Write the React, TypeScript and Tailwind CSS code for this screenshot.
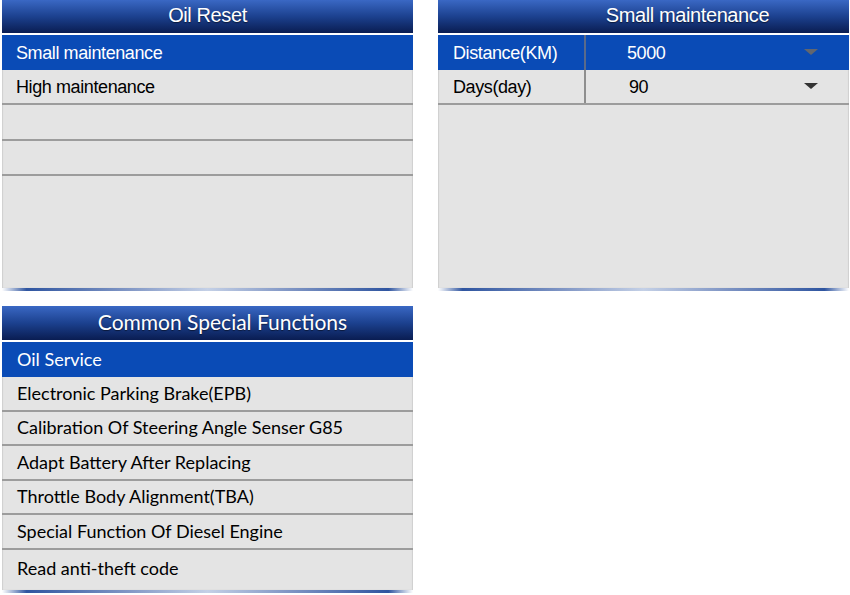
import React from "react";

const Header = ({ title, cls }: { title: string; cls: string }) => (
  <div
    className={`flex items-center justify-center text-white bg-gradient-to-b from-[#3a68c4] via-[#1c418f] to-[#0a1d52] border-b-2 border-white pb-[3px] ${cls}`}
  >
    <span className="[text-shadow:0_1px_1px_rgba(0,0,0,0.5)]">{title}</span>
  </div>
);

const BottomGlow = () => (
  <div className="h-[3px] bg-[linear-gradient(to_right,rgba(47,85,160,0)_0%,#2f55a0_6%,#7f95c4_30%,#c4d0e6_50%,#7f95c4_70%,#2f55a0_94%,rgba(47,85,160,0)_100%)]" />
);

const Tri = ({ color }: { color: string }) => (
  <svg width="14" height="7" viewBox="0 0 14 7" className="mr-[31px]">
    <polygon points="0,0 14,0 7,6" fill={color} />
  </svg>
);

export default function App() {
  const arial = { fontFamily: '"Liberation Sans", Arial, sans-serif' };
  const segoe = { fontFamily: 'Lato, "Noto Sans", sans-serif' };
  const funcs = [
    "Electronic Parking Brake(EPB)",
    "Calibration Of Steering Angle Senser G85",
    "Adapt Battery After Replacing",
    "Throttle Body Alignment(TBA)",
    "Special Function Of Diesel Engine",
  ];
  const rowTxt = "text-[18px] tracking-[-0.4px]";
  return (
    <div className="w-[850px] h-[595px] bg-white overflow-hidden flex flex-col">
      <div className="flex gap-[25px] pl-[2px] h-[291px]">
        {/* Panel 1 */}
        <div className="w-[411px] flex flex-col" style={arial}>
          <div className="flex-1 flex flex-col bg-[#e4e4e4] shadow-[inset_1px_0_1px_#cfcfcf,inset_-1px_0_1px_#cfcfcf]">
            <Header title="Oil Reset" cls="h-[35px] text-[20px] tracking-[-0.4px]" />
            <div className={`h-[35px] bg-[#0a4bb6] text-white ${rowTxt} flex items-center pl-[14px] pt-[1px]`}>
              Small maintenance
            </div>
            <div className={`h-[35px] ${rowTxt} text-black flex items-center pl-[14px] pt-[1px] border-b-2 border-[#9c9c9c]`}>
              High maintenance
            </div>
            <div className="h-[36px] border-b-2 border-[#9c9c9c]" />
            <div className="h-[35px] border-b-2 border-[#9c9c9c]" />
            <div className="flex-1" />
          </div>
          <BottomGlow />
        </div>
        {/* Panel 2 */}
        <div className="w-[411px] flex flex-col" style={arial}>
          <div className="flex-1 flex flex-col bg-[#e4e4e4] shadow-[inset_1px_0_1px_#cfcfcf,inset_-1px_0_1px_#cfcfcf]">
            <Header title="Small maintenance" cls="h-[35px] text-[20px] tracking-[-0.4px] pl-[88px]" />
            <div className={`h-[35px] bg-[#0a4bb6] text-white ${rowTxt} flex items-center`}>
              <div className="w-[148px] pl-[15px] pt-[1px] h-full flex items-center border-r-2 border-[#5a6a8a]">
                Distance(KM)
              </div>
              <div className="flex-1 pl-[41px] pt-[1px]">5000</div>
              <Tri color="#62666f" />
            </div>
            <div className={`h-[35px] text-black ${rowTxt} flex items-center border-b-2 border-[#9c9c9c]`}>
              <div className="w-[148px] pl-[15px] pt-[1px] h-full flex items-center border-r-2 border-[#8e8e8e]">
                Days(day)
              </div>
              <div className="flex-1 pl-[43px] pt-[1px]">90</div>
              <Tri color="#333333" />
            </div>
            <div className="flex-1" />
          </div>
          <BottomGlow />
        </div>
      </div>
      {/* Panel 3 */}
      <div className="mt-[15px] ml-[2px] w-[411px] flex flex-col h-[287px]" style={segoe}>
        <div className="flex-1 flex flex-col bg-[#e4e4e4] shadow-[inset_1px_0_1px_#cfcfcf,inset_-1px_0_1px_#cfcfcf]">
          <Header title="Common Special Functions" cls="h-[36px] text-[21px] pl-[30px]" />
          <div className="h-[35px] bg-[#0a4bb6] text-white text-[18px] flex items-center pl-[15px]">
            Oil Service
          </div>
          {funcs.map((f) => (
            <div
              key={f}
              className="h-[34.5px] text-black text-[18px] flex items-center pl-[15px] border-b-2 border-[#9c9c9c]"
            >
              {f}
            </div>
          ))}
          <div className="flex-1 text-black text-[18px] flex items-start pt-[5px] pl-[15px]">
            Read anti-theft code
          </div>
        </div>
        <BottomGlow />
      </div>
    </div>
  );
}
